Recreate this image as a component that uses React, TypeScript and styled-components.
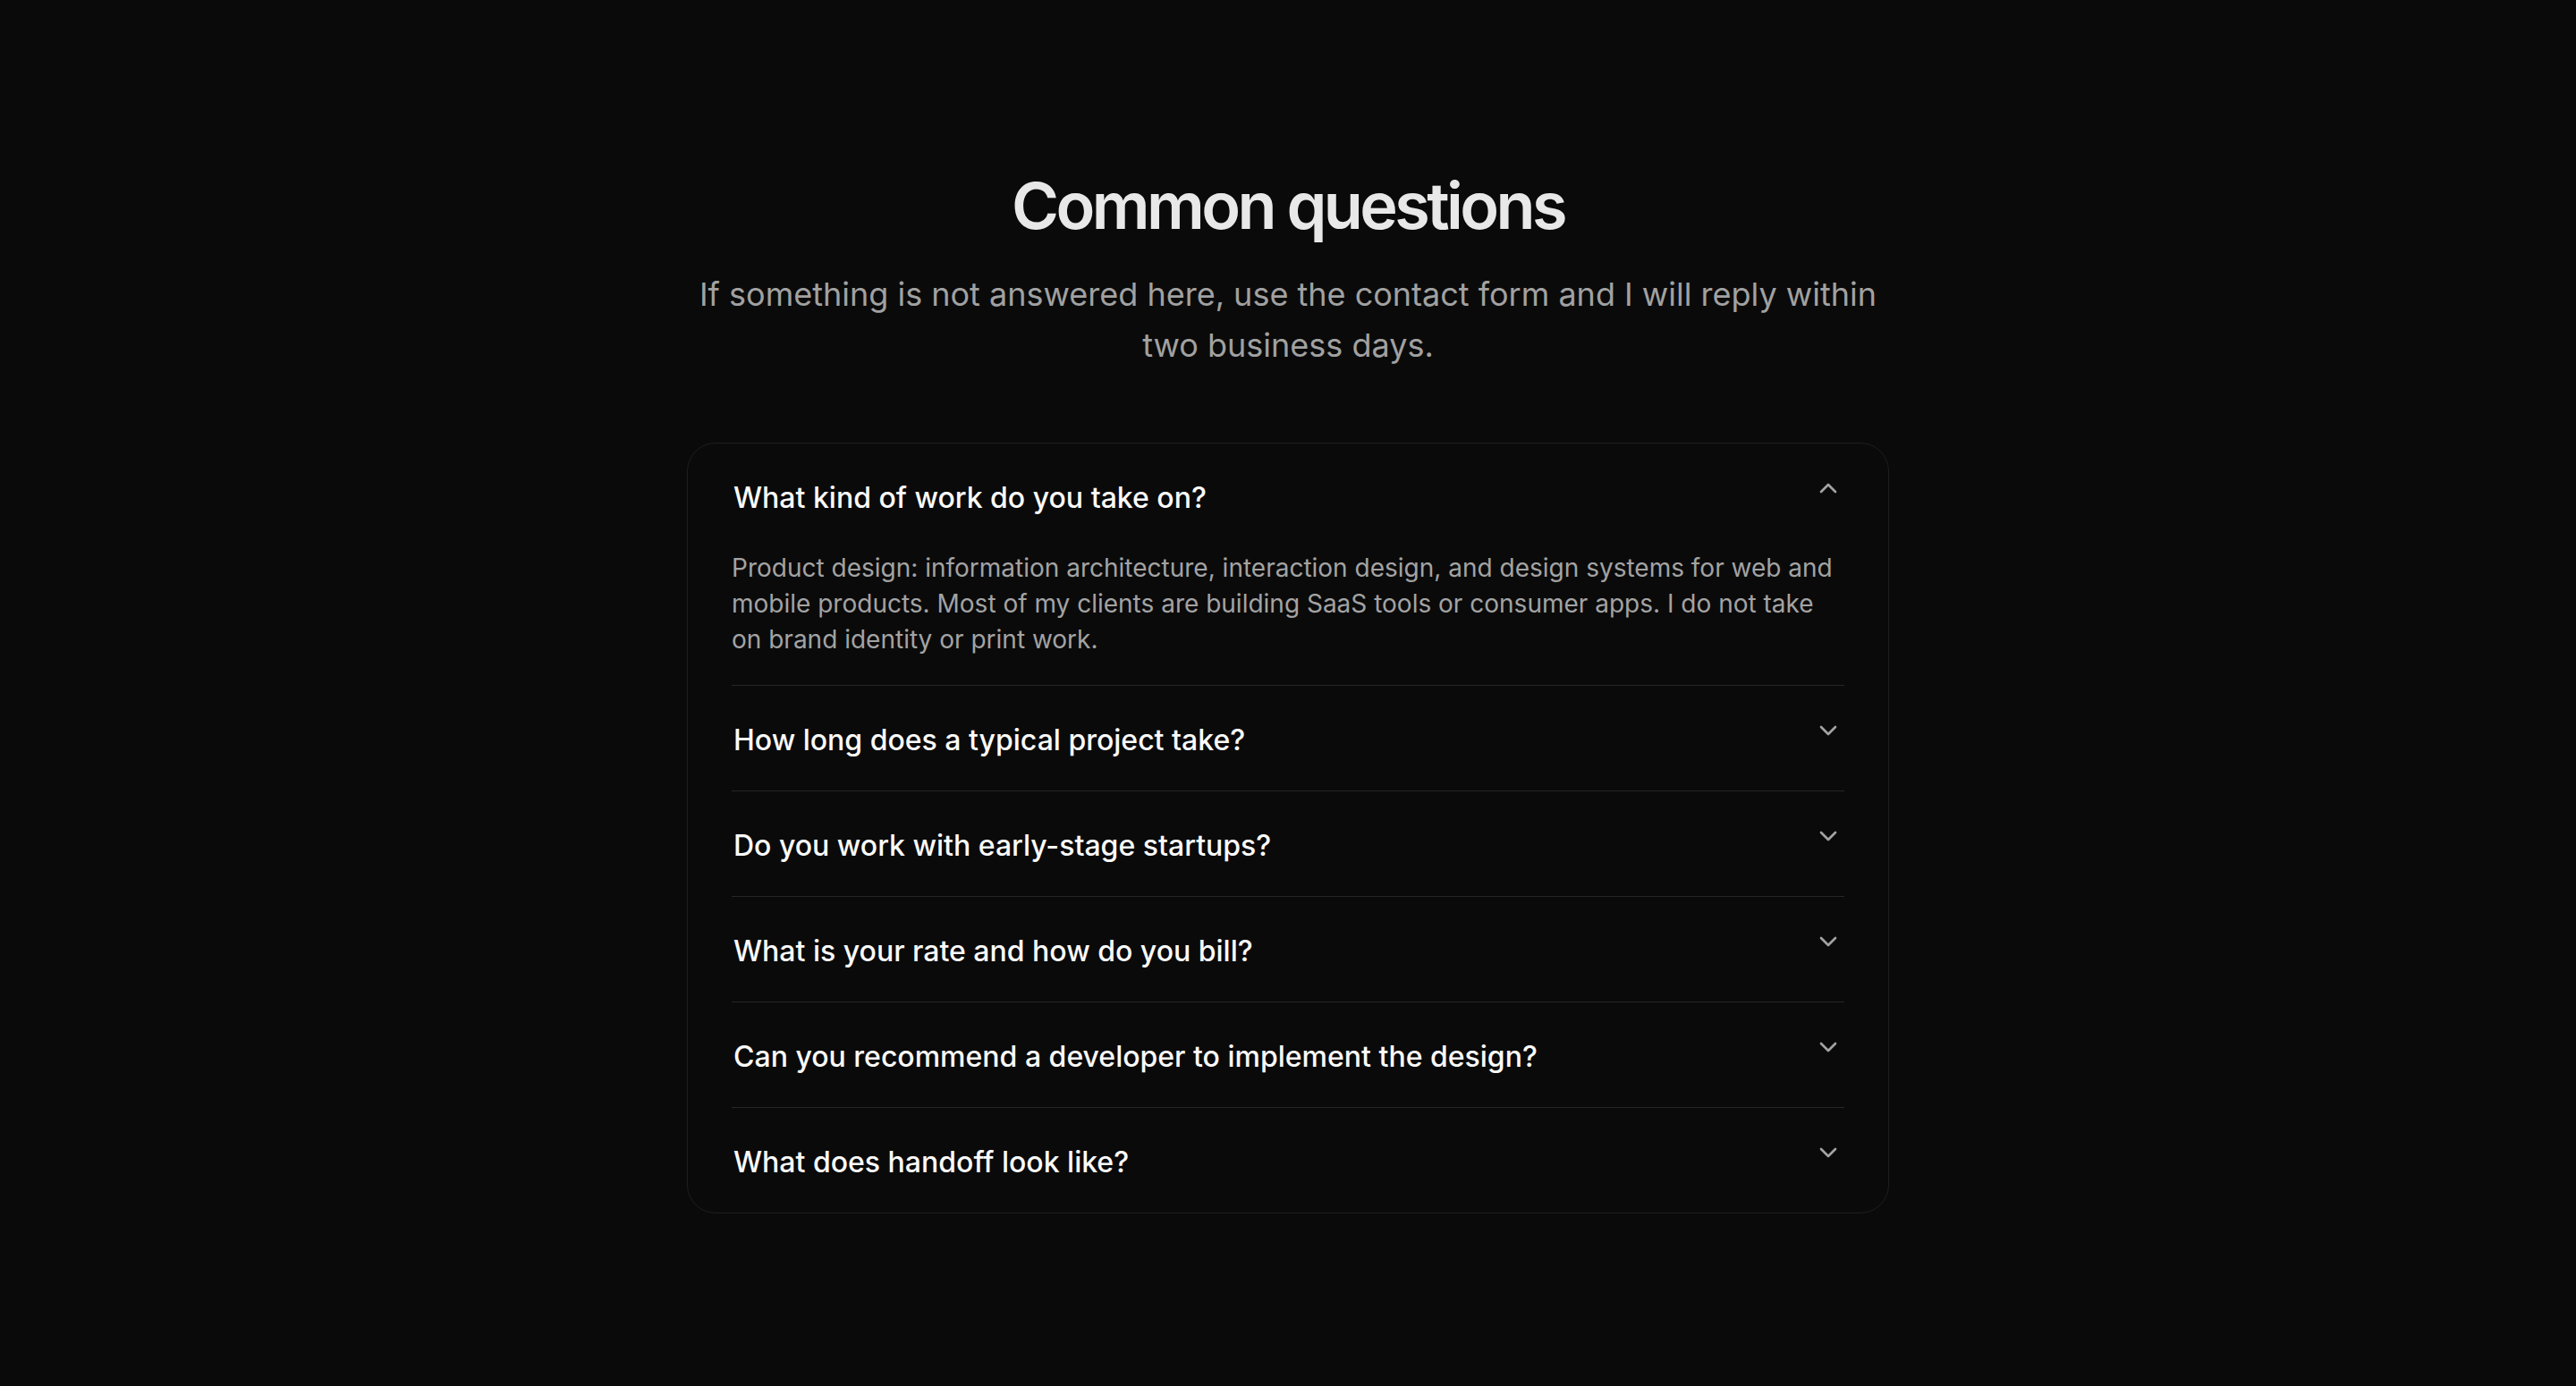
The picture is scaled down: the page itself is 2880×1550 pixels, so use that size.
import React, { useState } from "react";
import styled, { createGlobalStyle } from "styled-components";
import { ChevronDown, ChevronUp } from "lucide-react";

const GlobalStyle = createGlobalStyle`
  *, *::before, *::after { box-sizing: border-box; }
  html, body { margin: 0; padding: 0; background: #0a0a0a; }
  body {
    font-family: Inter, "Noto Sans", "Liberation Sans", sans-serif;
    color: #fafafa;
    -webkit-font-smoothing: antialiased;
  }
`;

const Page = styled.main`
  min-height: 100vh;
  background: #0a0a0a;
  display: flex;
  flex-direction: column;
  align-items: center;
  padding: 190px 24px 120px;
`;

const Title = styled.h2`
  margin: 0;
  font-family: Inter, "Liberation Sans", sans-serif;
  font-size: 72px;
  line-height: 1.1;
  font-weight: 600;
  letter-spacing: -0.05em;
  color: #e8e8e8;
  text-align: center;
`;

const Subtitle = styled.p`
  margin: 32px 0 0;
  max-width: 1344px;
  font-size: 36px;
  line-height: 57px;
  font-weight: 400;
  color: #a1a1a1;
  text-align: center;
`;

const Card = styled.section`
  margin-top: 80px;
  width: 1344px;
  border: 1px solid #1e1e1e;
  border-radius: 32px;
  padding: 0 49px;
  background: #0a0a0a;
`;

const Item = styled.div`
  border-bottom: 1px solid #262626;
  &:last-child {
    border-bottom: none;
  }
`;

const Trigger = styled.button`
  width: 100%;
  display: flex;
  align-items: flex-start;
  justify-content: space-between;
  gap: 24px;
  padding: 38px 2px 34px 2px;
  background: transparent;
  border: none;
  cursor: pointer;
  text-align: left;
  font-family: Inter, "Liberation Sans", sans-serif;
  font-size: 32px;
  line-height: 45px;
  font-weight: 500;
  color: #fafafa;
`;

const IconWrap = styled.span`
  flex: none;
  display: flex;
  width: 32px;
  height: 32px;
  margin-top: -4px;
  color: #a3a3a3;
`;

const Answer = styled.div`
  padding: 2px 0 31px;
  font-size: 28px;
  line-height: 40px;
  font-weight: 400;
  color: #a3a3a3;
`;

const faqs = [
  {
    q: "What kind of work do you take on?",
    a: "Product design: information architecture, interaction design, and design systems for web and mobile products. Most of my clients are building SaaS tools or consumer apps. I do not take on brand identity or print work.",
  },
  {
    q: "How long does a typical project take?",
    a: "Most engagements run between four and twelve weeks, depending on scope.",
  },
  {
    q: "Do you work with early-stage startups?",
    a: "Yes, as long as there is a clear problem to solve and a team ready to ship.",
  },
  {
    q: "What is your rate and how do you bill?",
    a: "I bill per project with a fixed scope, paid in milestones.",
  },
  {
    q: "Can you recommend a developer to implement the design?",
    a: "I can introduce you to a few developers I have worked with before.",
  },
  {
    q: "What does handoff look like?",
    a: "Annotated Figma files, a component inventory, and a walkthrough call.",
  },
];

export default function App() {
  const [open, setOpen] = useState<number | null>(0);
  return (
    <>
      <GlobalStyle />
      <Page>
        <Title>Common questions</Title>
        <Subtitle>
          If something is not answered here, use the contact form and I will reply within two business days.
        </Subtitle>
        <Card>
          {faqs.map((f, i) => {
            const isOpen = open === i;
            return (
              <Item key={f.q}>
                <Trigger onClick={() => setOpen(isOpen ? null : i)} aria-expanded={isOpen}>
                  <span>{f.q}</span>
                  <IconWrap>
                    {isOpen ? <ChevronUp size={32} strokeWidth={2} /> : <ChevronDown size={32} strokeWidth={2} />}
                  </IconWrap>
                </Trigger>
                {isOpen && <Answer>{f.a}</Answer>}
              </Item>
            );
          })}
        </Card>
      </Page>
    </>
  );
}
